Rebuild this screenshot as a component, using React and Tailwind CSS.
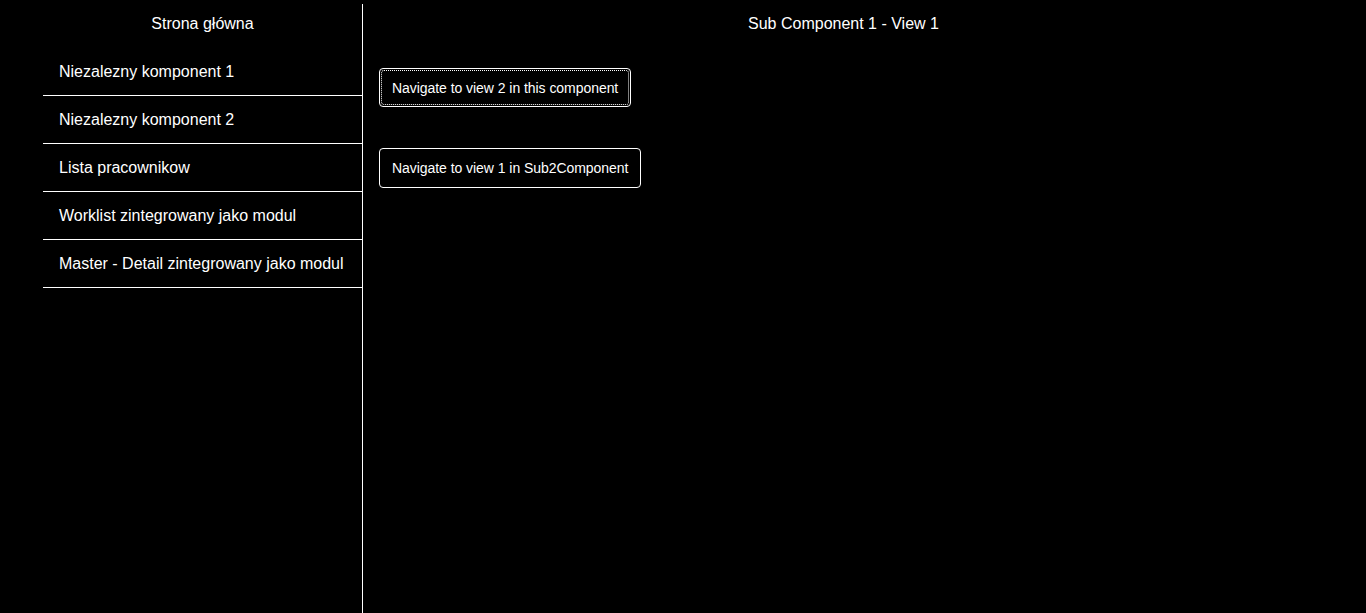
export default function App() {
  const items = [
    "Niezalezny komponent 1",
    "Niezalezny komponent 2",
    "Lista pracownikow",
    "Worklist zintegrowany jako modul",
    "Master - Detail zintegrowany jako modul",
  ];
  return (
    <div className="h-[613px] w-[1366px] bg-black text-white flex pl-[43px] pr-[42px] overflow-hidden" style={{ fontFamily: '"Liberation Sans", Arial, sans-serif' }}>
      <div className="w-[319px] shrink-0 flex flex-col">
        <div className="h-[48px] flex items-center justify-center text-[16px] pb-px">Strona główna</div>
        <ul>
          {items.map((t) => (
            <li key={t} className="h-[48px] pl-[16px] pt-px flex items-center text-[16px] border-b border-white">{t}</li>
          ))}
        </ul>
      </div>
      <div className="w-px bg-white mt-[4px] shrink-0"></div>
      <div className="flex-1 flex flex-col">
        <div className="h-[47px] flex items-center justify-center text-[16px]">Sub Component 1 - View 1</div>
        <div className="pl-[16px] pt-[21px] flex flex-col items-start gap-[41px]">
          <button className="relative h-[39px] px-[12px] pt-[2px] border border-white rounded-[4px] text-[14px] tracking-[-0.05px] bg-black text-white">
            <span className="absolute inset-[1px] border border-dotted border-white rounded-[3px]"></span>
            Navigate to view 2 in this component
          </button>
          <button className="h-[40px] px-[12px] border border-white rounded-[4px] text-[14px] tracking-[-0.05px] bg-black text-white">
            Navigate to view 1 in Sub2Component
          </button>
        </div>
      </div>
    </div>
  );
}
